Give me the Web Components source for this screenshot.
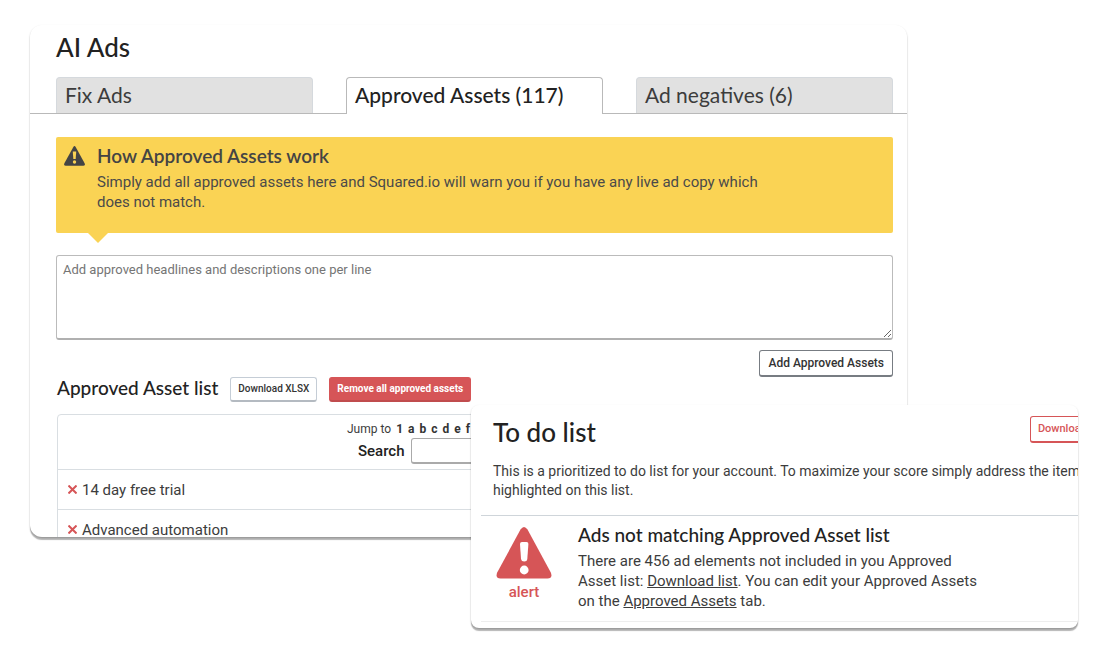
<!DOCTYPE html>
<html lang="en">
<head>
<meta charset="utf-8">
<title>AI Ads</title>
<style>
  body {
    margin: 0;
    background: #fff;
    color: #3c3c3c;
    font: 15px/20px Roboto, sans-serif;
    --heading: Lato, sans-serif;
    --ink: #222;
    --red: #d65557;
    --line: #d9dee2;
  }
  h1, h2, h3, p { margin: 0; font-weight: 400; }
  h1, h2, h3 { color: var(--ink); font-family: var(--heading); }
  h1 { font-size: 26px; line-height: 32px; font-weight: 500; }
  h2 { font-size: 19px; line-height: 22px; font-weight: 500; }
  a { color: inherit; }
  .title { padding: 6px 26px 14px; }
  .body { padding: 23px 14px 0 26px; }
  .add { display: flex; justify-content: flex-end; padding: 10px 0 0; }
  .list-head { display: flex; align-items: flex-start; gap: 12px; padding: 0 0 12px 1px; }
  .todo-head { display: flex; justify-content: space-between; align-items: flex-start; padding: 11px 0 14px 22px; }
  .intro { padding: 0 0 15px 22px; font-size: 14px; line-height: 19px; }
</style>
</head>
<body>

<page-stage>
  <app-card>
    <h1 class="title">AI Ads</h1>
    <tab-strip>
      <tab-item>Fix Ads</tab-item>
      <tab-item selected>Approved Assets (117)</tab-item>
      <tab-item>Ad negatives (6)</tab-item>
    </tab-strip>
    <div class="body">
      <info-banner>
        <span slot="title">How Approved Assets work</span>
        Simply add all approved assets here and Squared.io will warn you if you have any live ad copy which does not match.
      </info-banner>
      <asset-input></asset-input>
      <div class="add"><ui-button kind="dark">Add Approved Assets</ui-button></div>
      <div class="list-head">
        <h2>Approved Asset list</h2>
        <ui-button kind="light">Download XLSX</ui-button>
        <ui-button kind="danger">Remove all approved assets</ui-button>
      </div>
      <asset-table items="14 day free trial|Advanced automation"></asset-table>
    </div>
  </app-card>

  <app-card slot="front" wide-content>
    <div class="todo-head">
      <h1>To do list</h1>
      <ui-button kind="outline">Download XLSX</ui-button>
    </div>
    <p class="intro">This is a prioritized to do list for your account. To maximize your score simply address the items highlighted on this list.</p>
    <todo-item level="alert">
      <span slot="title">Ads not matching Approved Asset list</span>
      There are 456 ad elements not included in you Approved Asset list: <a href="#download">Download list</a>. You can edit your Approved Assets on the <a href="#approved">Approved Assets</a> tab.
    </todo-item>
  </app-card>
</page-stage>

<script>
// makes an element whose shadow root is cloned from the given markup
function define(name, html, setup) {
  const template = document.createElement("template");
  template.innerHTML = html;

  customElements.define(name, class extends HTMLElement {
    constructor() {
      super();
      this.attachShadow({ mode: "open" }).append(template.content.cloneNode(true));
    }
    connectedCallback() {
      if (setup) setup(this, this.shadowRoot);
    }
  });
}

// back card in the flow, front card lying over its corner
define("page-stage", `
<style>
  :host { display: block; position: relative; box-sizing: border-box; min-height: 100vh; padding: 25px 193px 21px 30px; }
  .front { position: absolute; top: 405px; right: 22px; left: 471px; }
</style>
<slot></slot>
<div class="front"><slot name="front"></slot></div>
`);

define("app-card", `
<style>
  :host {
    display: block;
    background: #fff;
    border-radius: 12px;
    box-shadow: 0 1px 2px rgba(0, 0, 0, .2), 0 3px 1px rgba(0, 0, 0, .28);
  }
  .clip { overflow: hidden; border-radius: inherit; max-height: 512px; }
  :host([wide-content]) { border-radius: 8px; }
  :host([wide-content]) .inner { width: calc(100% + 46px); }
</style>
<div class="clip"><div class="inner"><slot></slot></div></div>
`);

define("tab-strip", `
<style>
  :host {
    display: grid;
    grid-template-columns: repeat(3, 1fr);
    gap: 33px;
    padding: 0 14px 0 26px;
    border-bottom: 1px solid #b9b9b9;
  }
</style>
<slot></slot>
`);

define("tab-item", `
<style>
  :host { display: block; }
  button {
    display: block;
    width: 100%;
    height: 36px;
    padding: 0 8px 2px;
    border: 1px solid #d5d9dd;
    border-bottom: 0;
    border-radius: 4px 4px 0 0;
    background: #e1e1e1;
    color: #3c3c3c;
    font: 400 21px/32px var(--heading);
    text-align: left;
  }
  :host([selected]) { margin-bottom: -1px; }
  :host([selected]) button {
    height: 37px;
    background: #fff;
    border-color: #b9b9b9;
    color: var(--ink);
    font-weight: 500;
  }
</style>
<button type="button"><slot></slot></button>
`);

define("info-banner", `
<style>
  :host {
    display: flex;
    gap: 12px;
    position: relative;
    padding: 7px 8px 21px;
    border-radius: 2px;
    background: #fad354;
    color: #4a4a4a;
  }
  :host::after {
    content: "";
    position: absolute;
    top: 100%;
    left: 32px;
    border: 10px solid transparent;
    border-top-color: #fad354;
    border-bottom: 0;
  }
  svg { flex: none; width: 21px; height: 20px; margin-top: 2px; }
  h3 { margin: 0; padding-bottom: 4px; font: 600 19px/24px var(--heading); color: #444; }
  p { margin: 0; max-width: 670px; }
</style>
<svg viewBox="0 0 21 20" aria-hidden="true">
  <path d="M9.200 1.200Q10.500-1 11.800 1.200L20.600 17.200Q21.500 19.700 19.200 19.700H1.800Q-.5 19.700.4 17.200Z" fill="#444"/>
  <path d="M8.800 5.500h3.400l-.5 7.500h-2.400z" fill="#fad354"/>
  <circle cx="10.500" cy="16" r="1.700" fill="#fad354"/>
</svg>
<div>
  <h3><slot name="title"></slot></h3>
  <p><slot></slot></p>
</div>
`);

define("asset-input", `
<style>
  :host { display: block; padding-top: 22px; }
  textarea {
    display: block;
    box-sizing: border-box;
    width: 100%;
    height: 85px;
    padding: 6px;
    border: 1px solid #bbb;
    border-bottom: 2px solid #b0b0b0;
    border-radius: 3px;
    font: 13px/16px Roboto, sans-serif;
  }
  textarea::placeholder { color: #757575; }
</style>
<textarea aria-label="Approved assets" placeholder="Add approved headlines and descriptions one per line"></textarea>
`);

define("ui-button", `
<style>
  :host { display: block; flex: none; }
  button {
    display: block;
    padding: 4px 7px;
    border: 1px solid #c5cdd6;
    border-bottom: 2px solid #b4bac1;
    border-radius: 3px;
    background: #fff;
    color: #333;
    font: 500 10px/14px Roboto, sans-serif;
    white-space: nowrap;
  }
  :host([kind="dark"]) button { padding: 3px 8px; border-color: #777c82; font-size: 12px; line-height: 18px; }
  :host([kind="danger"]) button { background: var(--red); border-color: var(--red) var(--red) #c04c4e; color: #fff; font-weight: 700; }
  :host([kind="outline"]) button { border-color: var(--red); color: var(--red); font-size: 11px; line-height: 16px; }
</style>
<button type="button"><slot></slot></button>
`);

define("asset-table", `
<style>
  :host { display: block; margin-left: 1px; border: 1px solid var(--line); border-radius: 4px 4px 0 0; }
  .tools { padding: 5px 0 5px 289px; }
  nav { display: flex; gap: 5px; font-size: 12px; line-height: 18px; }
  nav a { color: #333; font-weight: 700; text-decoration: none; }
  .search { display: flex; align-items: center; gap: 6px; padding-left: 11px; }
  label { color: var(--ink); font-weight: 500; line-height: 26px; }
  input { box-sizing: border-box; width: 160px; height: 26px; border: 1px solid #aaa; border-bottom-width: 2px; border-radius: 3px; }
  table { width: 100%; border-collapse: collapse; }
  td { height: 39px; padding: 0 9px; border-top: 1px solid var(--line); }
  td div { display: flex; align-items: center; gap: 4px; }
  button { display: block; padding: 1px; border: 0; background: none; }
  svg { display: block; width: 9px; height: 9px; }
</style>
<div class="tools">
  <nav><span>Jump to</span></nav>
  <div class="search"><label for="search">Search</label><input id="search" type="text"></div>
</div>
<table><tbody></tbody></table>
`, (host, root) => {
  const nav = root.querySelector("nav");
  for (const key of "1abcdef") {
    const link = document.createElement("a");
    link.href = "#" + key;
    link.textContent = key;
    nav.append(link);
  }

  const body = root.querySelector("tbody");
  for (const item of host.getAttribute("items").split("|")) {
    const row = body.insertRow();
    row.innerHTML = `<td><div>
      <button type="button" aria-label="Remove"><svg viewBox="0 0 9 9"><path d="M.5 .5l8 8M8.500 .5l-8 8" stroke="#d65557" stroke-width="2"/></svg></button>
      <span></span>
    </div></td>`;
    row.querySelector("span").textContent = item;
  }
});

define("todo-item", `
<style>
  :host {
    display: flex;
    gap: 26px;
    margin: 0 0 6px 10px;
    padding: 7px 0 10px 15px;
    border-top: 1px solid #cfd5da;
    border-bottom: 1px solid #eee;
  }
  .level { flex: none; width: 56px; padding-top: 4px; color: var(--red); font-weight: 500; text-align: center; }
  svg { display: block; width: 56px; height: 52px; margin-bottom: 3px; }
  h3 { margin: 0; padding-bottom: 4px; color: var(--ink); font: 500 19px/24px var(--heading); }
  p { margin: 0; max-width: 406px; }
</style>
<div class="level">
  <svg viewBox="0 0 56 52" aria-hidden="true">
    <path d="M24.500 2.500Q28-2.500 31.500 2.500L54.800 45.500Q57 51.500 51.500 51.500H4.500Q-1 51.500 1.200 45.500Z" fill="#d65557"/>
    <path d="M24 17Q24 15 26 15H30.500Q32.500 15 32.400 17L31.300 32Q31 34.500 28.200 34.500T25 32Z" fill="#fff"/>
    <circle cx="28.200" cy="43" r="4.400" fill="#fff"/>
  </svg>
  <span></span>
</div>
<div>
  <h3><slot name="title"></slot></h3>
  <p><slot></slot></p>
</div>
`, (host, root) => {
  root.querySelector(".level span").textContent = host.getAttribute("level");
});
</script>
</body>
</html>
